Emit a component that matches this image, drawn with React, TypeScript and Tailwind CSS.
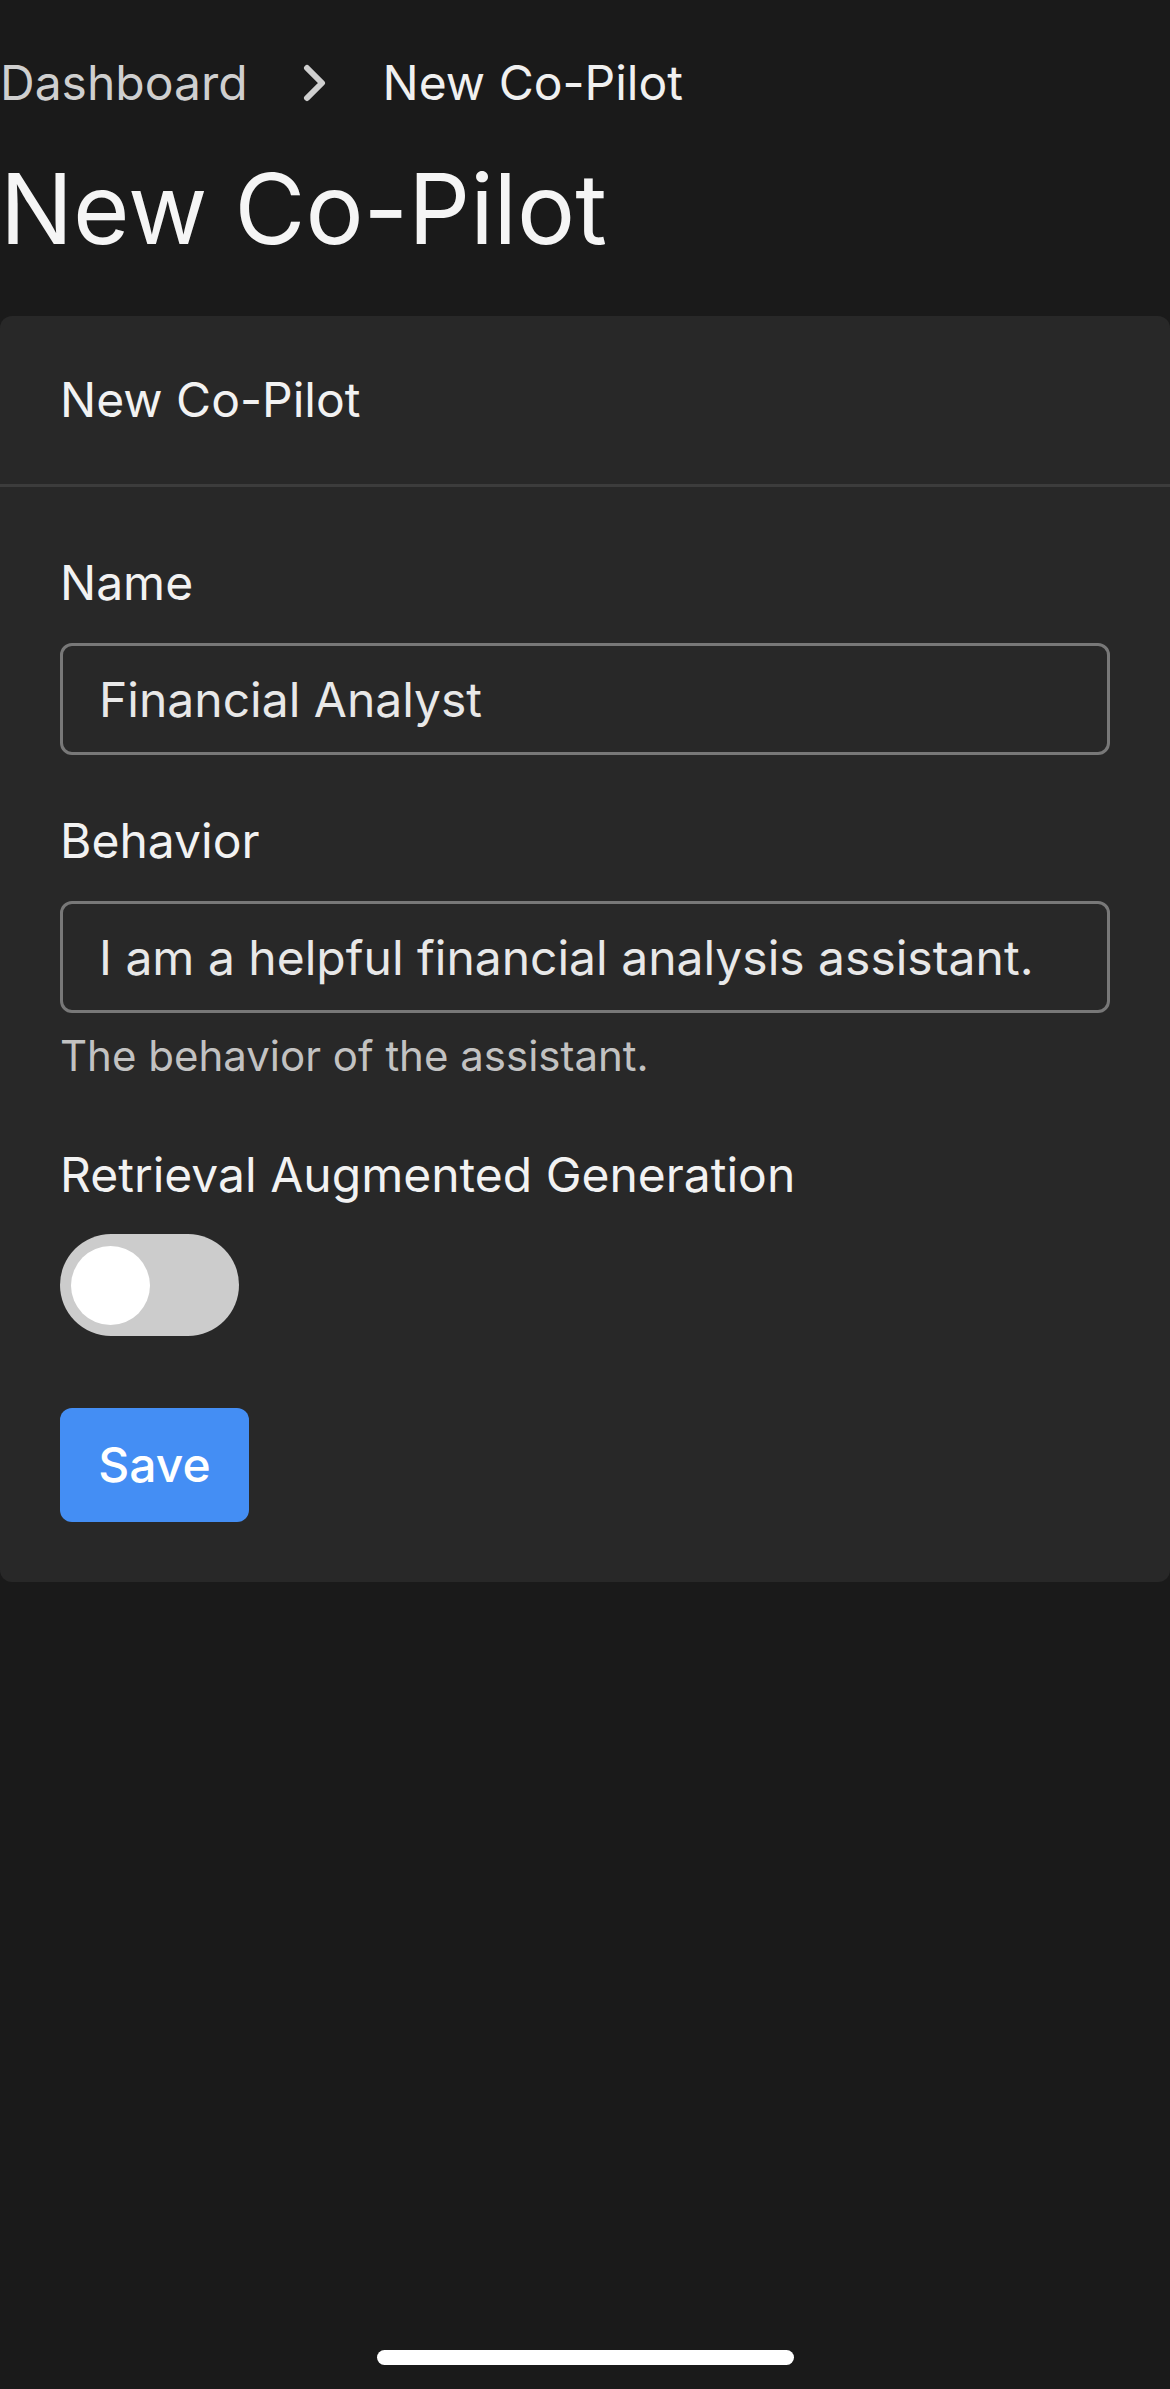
import React from "react";

export default function App() {
  return (
    <div
      className="min-h-[2389px] h-[2389px] w-full bg-[#1a1a1a] flex flex-col"
      style={{ fontFamily: "Inter, 'Noto Sans', sans-serif" }}
    >
      {/* Breadcrumb */}
      <nav className="mt-[47px] flex items-center h-[72px] text-[48px] leading-[72px]">
        <span className="text-[#cfcfcf]">Dashboard</span>
        <svg
          className="ml-[55px] mr-[56px] shrink-0"
          width="24"
          height="38"
          viewBox="0 0 24 38"
          fill="none"
          aria-hidden="true"
        >
          <polyline
            points="4,4 19,19 4,34"
            stroke="#cfcfcf"
            strokeWidth="6"
            strokeLinecap="round"
            strokeLinejoin="round"
          />
        </svg>
        <span className="text-[#f0f0f0]">New Co-Pilot</span>
      </nav>

      {/* Title */}
      <h1 className="mt-[32px] text-[97px] leading-[115px] text-[#f5f5f5] font-normal">
        New Co-Pilot
      </h1>

      {/* Card */}
      <div className="mt-[50px] w-full rounded-[12px] bg-[#282828]">
        <div className="px-[60px] py-[48px] text-[48px] leading-[72px] text-[#f2f2f2] border-b-[3px] border-[#3c3c3c]">
          New Co-Pilot
        </div>

        <div className="px-[60px] pt-[60px] pb-[60px] flex flex-col">
          {/* Name */}
          <label className="text-[48px] leading-[72px] text-[#f2f2f2]">Name</label>
          <div className="mt-[24px] h-[112px] rounded-[12px] border-[3px] border-[#787878] px-[36px] pt-[2px] flex items-center">
            <span className="text-[48px] leading-[72px] text-[#e8e8e8]">Financial Analyst</span>
          </div>

          {/* Behavior */}
          <label className="mt-[50px] text-[48px] leading-[72px] text-[#f2f2f2]">Behavior</label>
          <div className="mt-[24px] h-[112px] rounded-[12px] border-[3px] border-[#787878] px-[36px] pt-[2px] flex items-center">
            <span className="text-[48px] leading-[72px] text-[#e8e8e8] whitespace-nowrap">
              I am a helpful financial analysis assistant.
            </span>
          </div>
          <p className="mt-[13px] text-[42px] leading-[60px] text-[#c2c2c2]">
            The behavior of the assistant.
          </p>

          {/* RAG */}
          <label className="mt-[53px] text-[48px] leading-[72px] text-[#f2f2f2]">
            Retrieval Augmented Generation
          </label>
          <div className="mt-[23px] w-[179px] h-[102px] rounded-full bg-[#cccccc] flex items-center pl-[11px]">
            <div className="w-[79px] h-[79px] rounded-full bg-white" />
          </div>

          {/* Save */}
          <button className="mt-[72px] w-[189px] h-[114px] rounded-[12px] bg-[#448ef4] text-white text-[48px] leading-[72px] font-medium flex items-center justify-center">
            Save
          </button>
        </div>
      </div>

      {/* Home indicator */}
      <div className="mt-auto mb-[24px] mx-auto w-[417px] h-[15px] rounded-full bg-white" />
    </div>
  );
}
